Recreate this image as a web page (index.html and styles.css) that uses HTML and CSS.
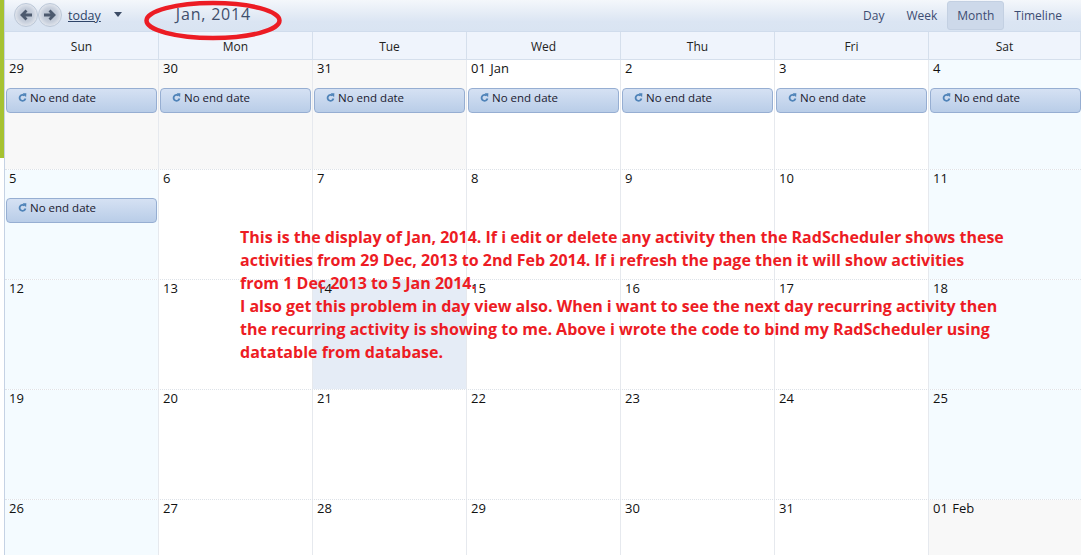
FILE: index.html
```html
<!DOCTYPE html>
<html>
<head>
    <link rel="stylesheet" href="styles.css">
</head>
<body>
    <svg class="icon-defs" width="0" height="0">
        <symbol id="recur" viewBox="0 0 10 10">
            <path d="M7.400 3A3.300 3.300 0 1 0 8.300 6.200" fill="none" stroke="#4f83b8" stroke-width="2"/>
            <path d="M5.200 0.400L9.300 0.400L9 4.800Z" fill="#4f83b8"/>
        </symbol>
    </svg>
    <div class="accent"></div>
    <div class="scheduler">
        <div class="toolbar">
            <div class="nav">
                <button class="nav-btn">
                    <svg width="14" height="12" viewBox="0 0 14 12"><path d="M13 6H4M7.500 1.500L3 6l4.500 4.500" fill="none" stroke="#4d5a6e" stroke-width="2.800"/></svg>
                </button>
                <button class="nav-btn">
                    <svg width="14" height="12" viewBox="0 0 14 12"><path d="M1 6h9M6.500 1.500L11 6l-4.500 4.500" fill="none" stroke="#4d5a6e" stroke-width="2.800"/></svg>
                </button>
            </div>
            <a class="today">today</a>
            <span class="caret"></span>
            <div class="title">Jan, 2014</div>
            <div class="views">
                <span class="view">Day</span>
                <span class="view">Week</span>
                <span class="view view-active">Month</span>
                <span class="view">Timeline</span>
            </div>
        </div>
        <div class="head-row">
            <div class="head-cell">Sun</div>
            <div class="head-cell">Mon</div>
            <div class="head-cell">Tue</div>
            <div class="head-cell">Wed</div>
            <div class="head-cell">Thu</div>
            <div class="head-cell">Fri</div>
            <div class="head-cell">Sat</div>
        </div>
        <div class="week">
            <div class="day other"><div class="num">29</div><div class="appt"><svg class="recur"><use href="#recur"/></svg>No end date</div></div>
            <div class="day other"><div class="num">30</div><div class="appt"><svg class="recur"><use href="#recur"/></svg>No end date</div></div>
            <div class="day other"><div class="num">31</div><div class="appt"><svg class="recur"><use href="#recur"/></svg>No end date</div></div>
            <div class="day"><div class="num">01 Jan</div><div class="appt"><svg class="recur"><use href="#recur"/></svg>No end date</div></div>
            <div class="day"><div class="num">2</div><div class="appt"><svg class="recur"><use href="#recur"/></svg>No end date</div></div>
            <div class="day"><div class="num">3</div><div class="appt"><svg class="recur"><use href="#recur"/></svg>No end date</div></div>
            <div class="day weekend"><div class="num">4</div><div class="appt"><svg class="recur"><use href="#recur"/></svg>No end date</div></div>
        </div>
        <div class="week">
            <div class="day weekend"><div class="num">5</div><div class="appt"><svg class="recur"><use href="#recur"/></svg>No end date</div></div>
            <div class="day"><div class="num">6</div></div>
            <div class="day"><div class="num">7</div></div>
            <div class="day"><div class="num">8</div></div>
            <div class="day"><div class="num">9</div></div>
            <div class="day"><div class="num">10</div></div>
            <div class="day weekend"><div class="num">11</div></div>
        </div>
        <div class="week">
            <div class="day weekend"><div class="num">12</div></div>
            <div class="day"><div class="num">13</div></div>
            <div class="day today-cell"><div class="num">14</div></div>
            <div class="day"><div class="num">15</div></div>
            <div class="day"><div class="num">16</div></div>
            <div class="day"><div class="num">17</div></div>
            <div class="day weekend"><div class="num">18</div></div>
        </div>
        <div class="week">
            <div class="day weekend"><div class="num">19</div></div>
            <div class="day"><div class="num">20</div></div>
            <div class="day"><div class="num">21</div></div>
            <div class="day"><div class="num">22</div></div>
            <div class="day"><div class="num">23</div></div>
            <div class="day"><div class="num">24</div></div>
            <div class="day weekend"><div class="num">25</div></div>
        </div>
        <div class="week">
            <div class="day weekend"><div class="num">26</div></div>
            <div class="day"><div class="num">27</div></div>
            <div class="day"><div class="num">28</div></div>
            <div class="day"><div class="num">29</div></div>
            <div class="day"><div class="num">30</div></div>
            <div class="day"><div class="num">31</div></div>
            <div class="day other"><div class="num">01 Feb</div></div>
        </div>
    </div>

    <svg class="ellipse" width="142" height="42" viewBox="0 0 142 42">
        <ellipse cx="71" cy="20.500" rx="66.500" ry="17.500" fill="none" stroke="#ec1c24" stroke-width="4.500"/>
    </svg>
    <div class="note">
        <div>This is the display of Jan, 2014. If i edit or delete any activity then the RadScheduler shows these</div>
        <div>activities from 29 Dec, 2013 to 2nd Feb 2014. If i refresh the page then it will show activities</div>
        <div>from 1 Dec 2013 to 5 Jan 2014.</div>
        <div>I also get this problem in day view also. When i want to see the next day recurring activity then</div>
        <div>the recurring activity is showing to me. Above i wrote the code to bind my RadScheduler using</div>
        <div>datatable from database.</div>
    </div>
</body>
</html>
```

FILE: styles.css
```css
html, body {
    margin: 0;
    height: 100%;
    overflow: hidden;
}
body {
    font-family: "Open Sans", "Noto Sans", Arial, sans-serif;
    font-size: 12px;
    color: #1a1a1a;
    background: #fff;
}
.icon-defs {
    display: block;
    height: 0;
}
.accent {
    position: absolute;
    left: 0;
    top: 0;
    width: 4px;
    height: 158px;
    background: #a6c232;
}
.scheduler {
    margin-left: 4px;
    border-left: 1px solid #c5d2e4;
    height: 555px;
    overflow: hidden;
}
.toolbar {
    display: flex;
    align-items: center;
    height: 31px;
    border-bottom: 1px solid #d0dcec;
    background: linear-gradient(#f4f7fb, #dbe5f3 70%, #d9e4f2);
}
.nav {
    display: flex;
    margin-left: 9px;
    margin-top: -2px;
}
.nav-btn {
    width: 24px;
    height: 24px;
    padding: 0;
    border: 1px solid #bcc8d8;
    border-radius: 50%;
    background: radial-gradient(circle at 50% 50%, #b4bdca 0, #c6cedb 45%, #eef1f6 85%);
    display: flex;
    align-items: center;
    justify-content: center;
}
.today {
    margin-left: 6px;
    font-size: 12.500px;
    color: #2f4468;
    text-decoration: underline;
}
.caret {
    margin-left: 13px;
    margin-top: -3px;
    border-left: 4px solid transparent;
    border-right: 4px solid transparent;
    border-top: 5px solid #3c4c66;
}
.title {
    margin-left: 54px;
    margin-top: -3px;
    font-size: 16px;
    letter-spacing: 0.800px;
    color: #3f4f6c;
}
.views {
    margin-left: auto;
    display: flex;
    align-items: center;
    padding-right: 9px;
}
.view {
    padding: 5px 9px;
    color: #3c4c72;
    border: 1px solid transparent;
    border-radius: 3px;
}
.view:first-child {
    margin-right: 2px;
}
.view-active {
    background: #cdd9ea;
    border-color: #c3d0e2;
}
.head-row {
    display: grid;
    grid-template-columns: repeat(6, 154px) 1fr;
    height: 27px;
    border-bottom: 1px solid #d5dfec;
    background: #eff4fc;
}
.head-cell {
    display: flex;
    align-items: center;
    justify-content: center;
    padding-top: 2px;
    border-right: 1px solid #d5dfec;
    color: #222;
}
.week {
    display: grid;
    grid-template-columns: repeat(6, 154px) 1fr;
    height: 109px;
    border-bottom: 1px dotted #dde2e8;
}
.day {
    border-right: 1px solid #e6e9ee;
    padding: 0 1px;
    min-width: 0;
}
.day:last-child {
    padding-right: 0;
    border-right: none;
}
.other {
    background: #f8f8f8;
}
.weekend {
    background: #f4fbff;
}
.today-cell {
    background: #e5ecf6;
}
.num {
    height: 28px;
    padding: 0 3px;
    line-height: 17px;
    font-size: 13px;
    word-spacing: 1px;
    color: #111;
}
.appt {
    display: flex;
    align-items: center;
    height: 25px;
    padding: 0 0 6px 11px;
    box-sizing: border-box;
    border: 1px solid #96aed2;
    border-radius: 4px;
    background: linear-gradient(#d5e1f3, #b9cde8);
    color: #1a2030;
    font-size: 11.500px;
}
.recur {
    width: 9px;
    height: 9px;
    margin-right: 3px;
}
.ellipse {
    position: absolute;
    left: 142px;
    top: 0;
}
.note {
    position: absolute;
    left: 240px;
    top: 226px;
    font-size: 16px;
    font-weight: 700;
    line-height: 23px;
    color: #ed1c24;
    white-space: nowrap;
}
```
